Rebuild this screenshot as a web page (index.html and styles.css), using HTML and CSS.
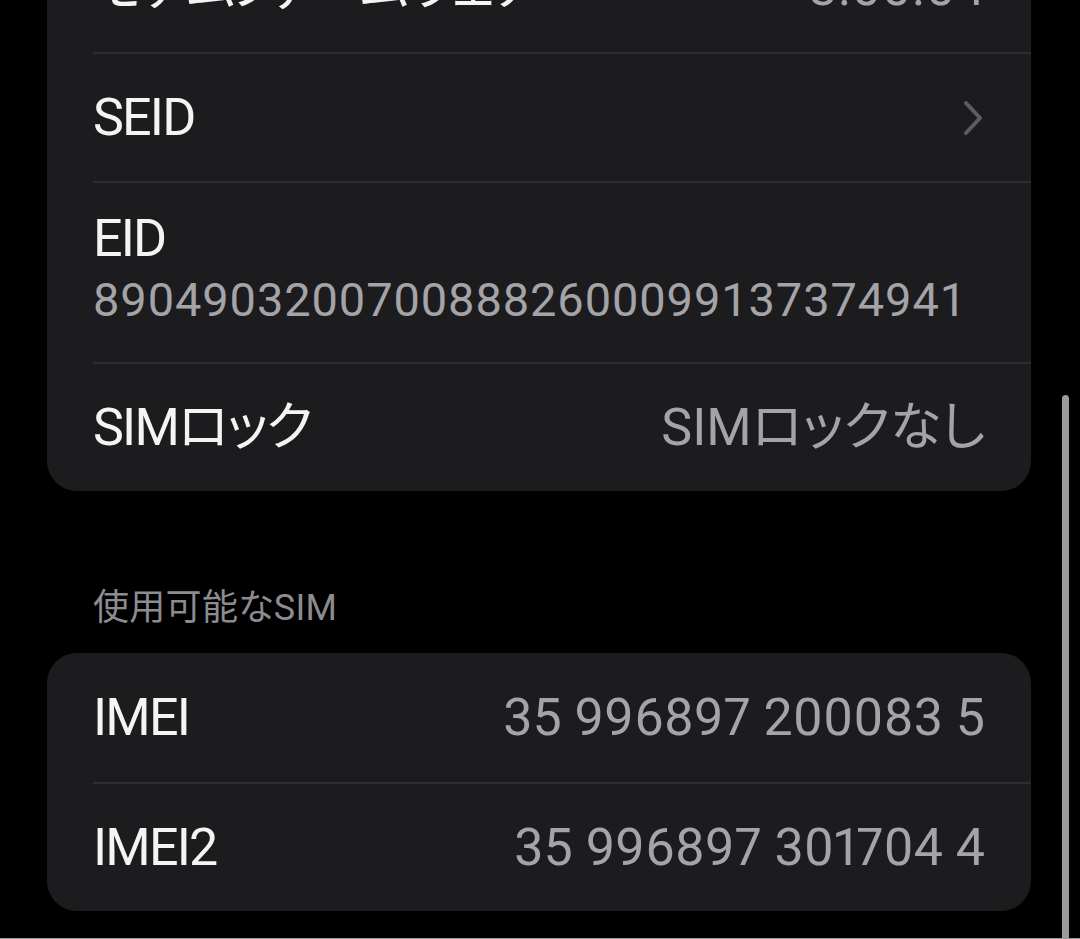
FILE: index.html
```html
<!DOCTYPE html>
<html lang="ja">
  <head>
    <meta charset="UTF-8" />
    <meta name="viewport" content="width=device-width, initial-scale=1.0" />
    <title>情報</title>
    <link rel="stylesheet" href="styles.css">
  </head>
  <body>
    <div class="frame">
      <div class="list">
        <div class="group group-first">
          <div class="row">
            <span class="label">モデムファームウェア</span>
            <span class="value">3.00.04</span>
          </div>
          <div class="row">
            <span class="label">SEID</span>
            <svg class="chevron" width="20" height="36" viewBox="0 0 20 36">
              <path d="M3 3 L17 18 L3 33" fill="none" stroke="#5c5c61" stroke-width="4" stroke-linecap="round" stroke-linejoin="round" />
            </svg>
          </div>
          <div class="row row-tall">
            <span class="label">EID</span>
            <span class="subvalue">89049032007008882600099137374941</span>
          </div>
          <div class="row">
            <span class="label">SIMロック</span>
            <span class="value">SIMロックなし</span>
          </div>
        </div>

        <div class="section-header">使用可能なSIM</div>

        <div class="group">
          <div class="row">
            <span class="label">IMEI</span>
            <span class="value">35 996897 200083 5</span>
          </div>
          <div class="row">
            <span class="label">IMEI2</span>
            <span class="value">35 996897 301704 4</span>
          </div>
        </div>
      </div>

      <!-- scroll indicator on the right edge -->
      <div class="scroll-indicator"></div>
    </div>
  </body>
</html>
```

FILE: styles.css
```css
body {
  margin: 0;
  background-color: #000;
  font-family: Roboto, "Noto Sans CJK JP", sans-serif;
  font-feature-settings: "palt";
  color: #f4f4f5;
  overflow: hidden;
}
.frame {
  position: relative;
  height: 939px;
  box-sizing: border-box;
  border-bottom: 1px solid #9c9c9c;
  overflow: hidden;
}
.list {
  padding: 0 49px 0 47px;
}
.group {
  background-color: #1c1c1e;
  border-radius: 30px;
  overflow: hidden;
}
.group-first {
  margin-top: -77px;
}
.row {
  box-sizing: border-box;
  height: 129px;
  margin-left: 46px;
  padding-right: 46px;
  display: flex;
  align-items: center;
  justify-content: space-between;
  border-top: 2px solid #2e2e31;
}
.row:first-child {
  border-top: none;
}
.row-tall {
  height: 181px;
  flex-direction: column;
  align-items: flex-start;
  justify-content: flex-start;
  padding-top: 28px;
  gap: 8px;
}
.label {
  font-size: 52px;
  line-height: 56px;
  letter-spacing: -1.8px;
  color: #f4f4f5;
}
.value {
  font-size: 52px;
  line-height: 56px;
  letter-spacing: 0;
  font-feature-settings: "palt", "pnum";
  color: #a3a3a8;
}
.subvalue {
  font-size: 47px;
  line-height: 50px;
  letter-spacing: 0.9px;
  color: #a3a3a8;
}
.chevron {
  display: block;
  margin-right: 2px;
}
.section-header {
  margin: 96px 0 24px 46px;
  font-size: 36px;
  line-height: 42px;
  letter-spacing: 0.3px;
  color: #8b8b90;
}
.scroll-indicator {
  position: absolute;
  left: 1062px;
  top: 395px;
  width: 7px;
  bottom: 0;
  border-radius: 4px 4px 0 0;
  background-color: #9a9a9a;
}
```
